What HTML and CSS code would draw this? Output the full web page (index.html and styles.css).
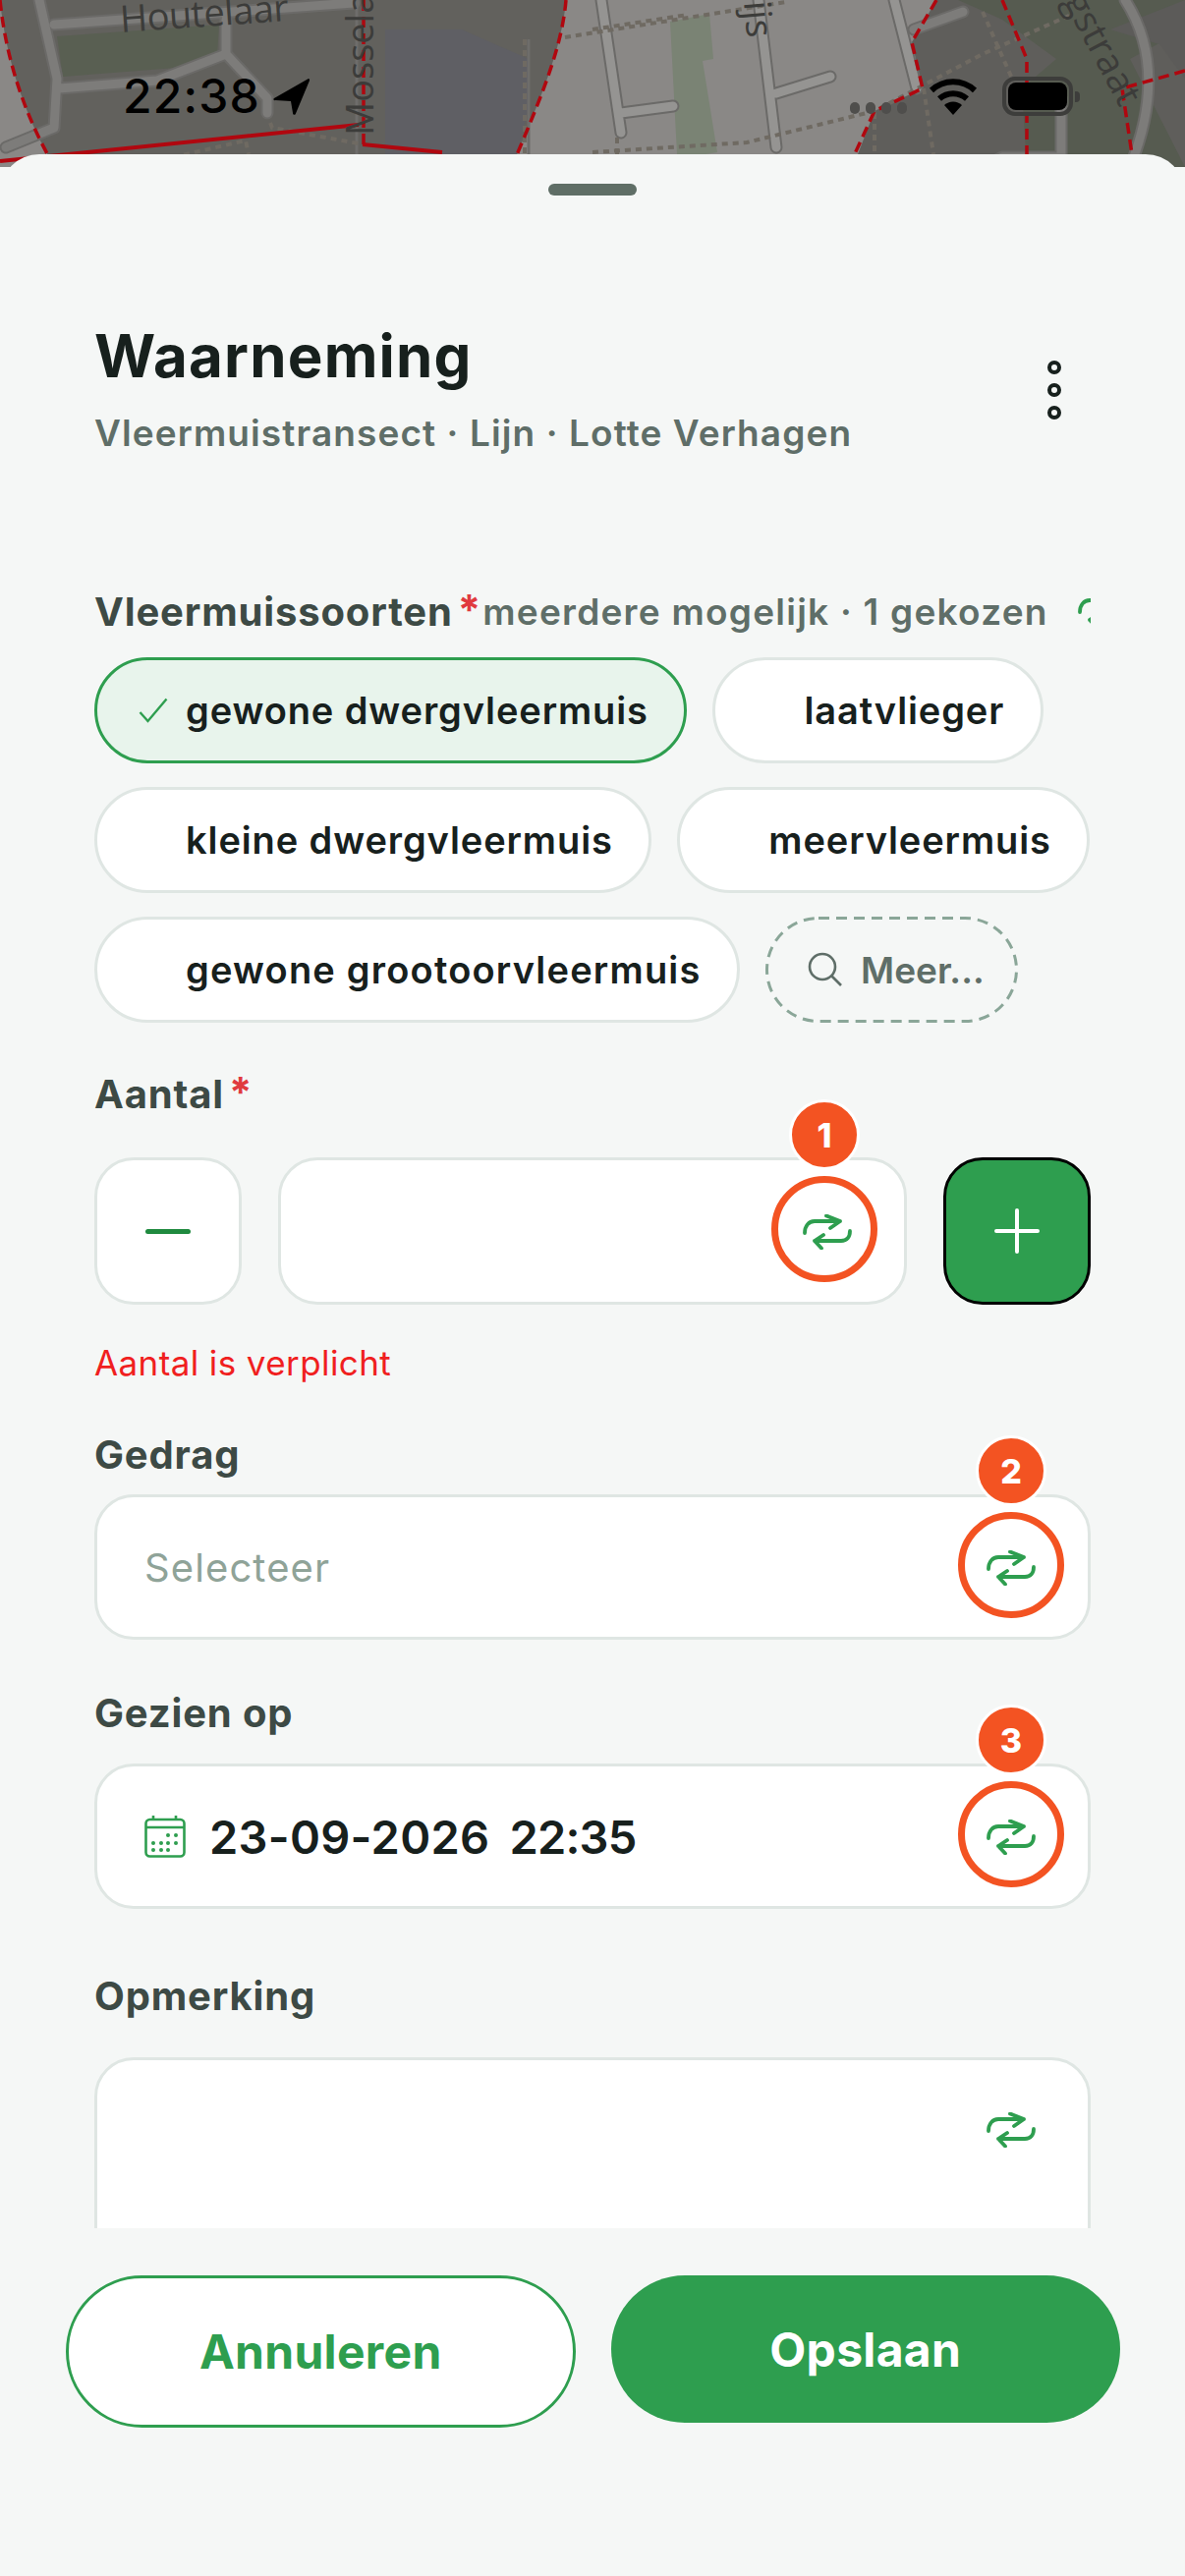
FILE: index.html
```html
<!DOCTYPE html>
<html lang="nl">
<head>
<meta charset="utf-8">
<title>Waarneming</title>
<link rel="stylesheet" href="styles.css">
</head>
<body>
<svg class="defs" width="0" height="0" aria-hidden="true">
  <symbol id="sync" viewBox="0 0 50 36">
    <path d="M2 19c0-7 4-12 10-12h26M24 1.500l14 5.500-10 7M48 17c0 6-3 10-9 10H12M21 21l-9 6 7 7.500" fill="none" stroke="currentColor" stroke-width="3.800" stroke-linecap="round" stroke-linejoin="round"/>
  </symbol>
</svg>

<div class="map">
  <svg viewBox="0 0 1206 170" width="1206" height="170" class="map-svg" aria-hidden="true">
    <rect width="1206" height="170" fill="#8a8886"/>
    <path d="M0 0C6 60 25 115 50 160H525C548 105 572 50 576 0Z" fill="#62615d"/>
    <path d="M392 30H470L538 60V110L525 160H392Z" fill="#5f5f64"/>
    <path d="M953 0L928 43L939 90L890 113L868 170H1206V0Z" fill="#5f5e5b"/>
    <path d="M975 0H1206V30L1150 60L1206 170H1045L1040 90L1075 60L1020 20Z" fill="#565b50"/>
    <path d="M1130 30L1206 0V80L1180 45Z" fill="#5c5b59"/>
    <path d="M58 37L223 25L221 56L192 68L64 78Z" fill="#595f52"/>
    <path d="M682 22L722 14L726 60L715 62L730 155L700 160L632 172L630 176H690Z" fill="#7a8374"/>
    <g fill="none" stroke="#6b6a68" stroke-width="13" stroke-linecap="round" stroke-linejoin="round">
      <path d="M40 0L58 80L55 130L6 150M55 25L360 3M230 20V55L160 82L60 90M230 55L272 100V115"/>
      <path d="M612 0L632 135M632 115L685 108M772 0L790 150M790 95L845 78M910 0L933 90M930 30L980 12M810 170V165"/>
      <path d="M1000 170L1020 160H1080V100M1145 0Q1190 70 1150 170"/>
    </g>
    <g fill="none" stroke="#7d7c7a" stroke-width="9" stroke-linecap="round" stroke-linejoin="round">
      <path d="M40 0L58 80L55 130L6 150M55 25L360 3M230 20V55L160 82L60 90M230 55L272 100V115"/>
    </g>
    <g fill="none" stroke="#959492" stroke-width="9" stroke-linecap="round" stroke-linejoin="round">
      <path d="M612 0L632 135M632 115L685 108M772 0L790 150M790 95L845 78M910 0L933 90"/>
    </g>
    <g fill="none" stroke="#7d7c7a" stroke-width="9" stroke-linecap="round" stroke-linejoin="round">
      <path d="M930 30L980 12M1000 170L1020 160H1080V100M1145 0Q1190 70 1150 170"/>
    </g>
    <path d="M363 0V157M538 40V157" stroke="#6e6d6b" stroke-width="3" fill="none"/>
    <g fill="none" stroke="#6f6a62" stroke-width="4" stroke-dasharray="6 5">
      <path d="M275 125L277 130L370 147M155 165L250 143L253 157M534 40V157"/>
      <path d="M575 38L800 2M603 30L700 15M603 155L760 145L890 113L1000 55L1090 15"/>
      <path d="M628 140V157M890 115V157M940 90L950 157M1000 12L1030 80"/>
    </g>
    <g fill="none" stroke="#b0070f" stroke-width="3.500" stroke-dasharray="11 6">
      <path d="M0 0C6 60 25 115 50 160M576 0C572 50 548 105 525 160"/>
      <path d="M370 0V147M953 0L928 43L939 90L890 113L866 165M1020 0L1045 60L1045 157M1206 72L1142 90L1152 157"/>
    </g>
    <path d="M0 164L365 127M369 147L450 155" fill="none" stroke="#b0070f" stroke-width="4"/>
    <g fill="#3c3c3a" font-family="'Open Sans', sans-serif" font-size="38">
      <text x="123" y="33" transform="rotate(-4 123 33)" textLength="172">Houtelaar</text>
      <text x="380" y="138" transform="rotate(-90 380 138)">Mosselaan</text>
      <text x="757" y="2" transform="rotate(85 757 2)">ijs</text>
      <text x="1058" y="-44" transform="rotate(62 1058 -44)">Hogstraat</text>
    </g>
  </svg>
  <div class="status">
    <div class="status-left">
      <span class="time">22:38</span>
      <svg class="loc" viewBox="0 0 38 38" aria-hidden="true"><path d="M36 1L1 21a1 1 0 0 0 1 2l16 1 2 12a1.500 1.500 0 0 0 3 .5L37 3a1.500 1.500 0 0 0-1-2Z" fill="#000"/></svg>
    </div>
    <div class="status-right">
      <div class="dots"><i></i><i></i><i></i><i></i></div>
      <svg class="wifi" viewBox="0 0 50 38" aria-hidden="true">
        <path d="M3 13a32 32 0 0 1 44 0" fill="none" stroke="#000" stroke-width="6"/>
        <path d="M11 21.500a21 21 0 0 1 28 0" fill="none" stroke="#000" stroke-width="6"/>
        <path d="M16 28a13 13 0 0 1 18 0L25 38Z" fill="#000"/>
      </svg>
      <div class="battery"><div class="battery-fill"></div></div>
    </div>
  </div>
</div>

<main class="sheet">
  <div class="handle"></div>
  <header class="head">
    <div>
      <h1 class="title">Waarneming</h1>
      <p class="subtitle">Vleermuistransect · Lijn · Lotte Verhagen</p>
    </div>
    <svg class="kebab" viewBox="0 0 16 60" aria-hidden="true">
      <circle cx="8" cy="7" r="5" /><circle cx="8" cy="30" r="5" /><circle cx="8" cy="53" r="5" />
    </svg>
  </header>

  <section class="form">
    <div class="label-row">
      <span class="label">Vleermuissoorten</span><span class="star">*</span><span class="hint">meerdere mogelijk · 1 gekozen</span>
      <svg class="sync-icon clipped"><use href="#sync"/></svg>
    </div>
    <div class="chips">
      <div class="chip selected">
        <span class="chip-slot"><svg class="check" viewBox="0 0 30 26" aria-hidden="true"><path d="M1.500 15l8 9L28.500 1.500" fill="none" stroke="#2e9e4f" stroke-width="2.400"/></svg></span>gewone dwergvleermuis
      </div>
      <div class="chip"><span class="chip-slot"></span>laatvlieger</div>
      <div class="chip"><span class="chip-slot"></span>kleine dwergvleermuis</div>
      <div class="chip"><span class="chip-slot"></span>meervleermuis</div>
      <div class="chip wide"><span class="chip-slot"></span>gewone grootoorvleermuis</div>
      <div class="chip more">
        <svg class="dash" viewBox="0 0 257 108" aria-hidden="true"><rect x="1.500" y="1.500" width="254" height="105" rx="52.500" fill="none" stroke="#8aa698" stroke-width="3" stroke-dasharray="11 7"/></svg>
        <svg class="search" viewBox="0 0 36 36" aria-hidden="true"><circle cx="15" cy="15" r="13" fill="none" stroke="#5f6e68" stroke-width="2.600"/><path d="M24.500 24.500L34 34" stroke="#5f6e68" stroke-width="2.600" fill="none"/></svg>Meer...
      </div>
    </div>

    <div class="label-row aantal-label"><span class="label">Aantal</span><span class="star">*</span></div>
    <div class="stepper">
      <div class="step-btn"><span class="minus"></span></div>
      <div class="field stepper-input">
        <div class="ring nudge"><span class="badge">1</span><svg class="sync-icon"><use href="#sync"/></svg></div>
      </div>
      <div class="step-btn plus">
        <svg class="plus-icon" viewBox="0 0 46 46" aria-hidden="true"><path d="M23 2V44M2 23H44" stroke="#fff" stroke-width="4" stroke-linecap="round"/></svg>
      </div>
    </div>
    <p class="error">Aantal is verplicht</p>

    <div class="label-row gedrag-label"><span class="label">Gedrag</span></div>
    <div class="field">
      <span class="placeholder">Selecteer</span>
      <div class="ring"><span class="badge">2</span><svg class="sync-icon"><use href="#sync"/></svg></div>
    </div>

    <div class="label-row gezien-label"><span class="label">Gezien op</span></div>
    <div class="field">
      <div class="date">
        <svg class="calendar" viewBox="0 0 42 44" aria-hidden="true">
          <rect x="1.500" y="5" width="39" height="37.500" rx="4" fill="none" stroke="#2e9e4f" stroke-width="2.600"/>
          <path d="M1.500 13H40.500M9 1V6M32 1V6" stroke="#2e9e4f" stroke-width="2.600" fill="none"/>
          <g fill="#2e9e4f">
            <circle cx="24" cy="21" r="2"/><circle cx="32" cy="21" r="2"/>
            <circle cx="9" cy="29" r="2"/><circle cx="17" cy="29" r="2"/><circle cx="24" cy="29" r="2"/><circle cx="32" cy="29" r="2"/>
            <circle cx="9" cy="36" r="2"/><circle cx="17" cy="36" r="2"/><circle cx="24" cy="36" r="2"/>
          </g>
        </svg>
        <span class="date-text">23-09-2026</span><span class="date-text clock">22:35</span>
      </div>
      <div class="ring"><span class="badge">3</span><svg class="sync-icon"><use href="#sync"/></svg></div>
    </div>

    <div class="label-row opmerking-label"><span class="label">Opmerking</span></div>
    <div class="field textarea">
      <div class="ring bare"><svg class="sync-icon"><use href="#sync"/></svg></div>
    </div>
  </section>

  <footer class="actions">
    <div class="btn ghost">Annuleren</div>
    <div class="btn solid">Opslaan</div>
  </footer>
</main>
</body>
</html>
```
FILE: styles.css
```css
* { box-sizing: border-box; }
html, body { margin: 0; padding: 0; }
body {
  width: 1206px;
  height: 2622px;
  overflow: hidden;
  position: relative;
  background: #f5f7f6;
  font-family: Inter, "Liberation Sans", sans-serif;
  color: #17201d;
}
.defs { position: absolute; }

.map { position: absolute; top: 0; left: 0; width: 1206px; height: 170px; overflow: hidden; }
.map-svg { display: block; }
.status { position: absolute; inset: 0; }
.status-left { position: absolute; left: 125px; top: 72px; display: flex; align-items: center; gap: 13px; height: 52px; }
.time { font-size: 48px; font-weight: 500; letter-spacing: 1.2px; color: #000; line-height: 52px; }
.loc { width: 38px; height: 38px; }
.status-right { position: absolute; left: 865px; top: 78px; display: flex; align-items: center; height: 40px; }
.dots { display: flex; gap: 6px; margin-top: 24px; margin-right: 22px; }
.dots i { width: 10px; height: 12px; border-radius: 5px; background: #4f4e4c; }
.wifi { width: 50px; height: 38px; margin-right: 25px; }
.battery { width: 72px; height: 40px; border: 4px solid #3d3d3b; border-radius: 13px; padding: 2px; position: relative; }
.battery::after { content: ""; position: absolute; right: -11px; top: 11px; width: 5px; height: 11px; border-radius: 0 4px 4px 0; background: #3d3d3b; }
.battery-fill { width: 100%; height: 100%; background: #000; border-radius: 8px; }

.sheet {
  position: relative;
  margin-top: 157px;
  height: 2465px;
  background: #f5f7f6;
  border-radius: 40px 40px 0 0;
  display: flex;
  flex-direction: column;
}
.handle { width: 90px; height: 12px; margin: 30px auto 0; border-radius: 6px; background: #5f6e66; flex: none; }
.head { display: flex; justify-content: space-between; align-items: center; margin-top: 127px; padding: 0 96px; flex: none; }
.title { margin: 0; font-size: 60px; line-height: 72px; font-weight: 700; letter-spacing: 1.2px; }
.subtitle { margin: 19px 0 0; font-size: 37px; line-height: 48px; font-weight: 600; color: #5f6e68; letter-spacing: 1.1px; }
.kebab { width: 16px; height: 60px; fill: none; stroke: #17201d; stroke-width: 4; margin-right: 29px; margin-top: 2px; }

.form { height: 1670px; margin-top: 133px; padding: 0 96px; overflow: hidden; flex: none; }
.label-row { display: flex; align-items: center; height: 48px; white-space: nowrap; overflow: hidden; }
.label { font-size: 40px; font-weight: 700; color: #3d4a45; letter-spacing: 0.85px; }
.star { color: #e03a3e; font-size: 42px; font-weight: 700; margin-left: 5px; margin-top: -4px; }
.hint { font-size: 37px; font-weight: 600; color: #5f6e68; margin-left: 2px; letter-spacing: 1.25px; }
.clipped { margin-left: 30px; flex: none; }
.sync-icon { width: 50px; height: 36px; color: #2e9e4f; display: block; flex: none; }

.chips { display: flex; flex-wrap: wrap; gap: 24px 26px; margin-top: 23px; }
.chip {
  height: 108px;
  border-radius: 54px;
  background: #fff;
  border: 3px solid #dfe6e3;
  display: flex;
  align-items: center;
  padding: 0 36.500px 0 38px;
  font-size: 38px;
  font-weight: 600;
  letter-spacing: 0.9px;
  white-space: nowrap;
}
.wide { letter-spacing: 1.2px; }
.chip-slot { width: 52px; display: flex; align-items: center; flex: none; }
.check { width: 30px; height: 26px; margin-left: 4px; }
.selected { background: #e8f4ec; border-color: #2e9e4f; }
.more { position: relative; width: 257px; background: transparent; border: 0; color: #5f6e68; padding: 0 0 0 43px; font-size: 37px; letter-spacing: 0; }
.dash { position: absolute; top: 0; left: 0; width: 257px; height: 108px; }
.search { width: 36px; height: 36px; margin-right: 18px; }

.aantal-label { margin-top: 48px; overflow: visible; }
.stepper { display: flex; gap: 37px; margin-top: 41px; }
.step-btn { width: 150px; height: 150px; border-radius: 40px; background: #fff; border: 3px solid #dfe6e3; display: flex; align-items: center; justify-content: center; flex: none; }
.minus { width: 46px; height: 5px; border-radius: 3px; background: #1f8a3f; }
.plus { background: #2e9e4f; border-color: #000; }
.plus-icon { width: 46px; height: 46px; }
.field {
  position: relative;
  height: 148px;
  border-radius: 40px;
  background: #fff;
  border: 3px solid #dfe6e3;
  display: flex;
  align-items: center;
  justify-content: space-between;
  padding: 0 24px 0 48px;
}
.stepper-input { flex: 1; height: 150px; justify-content: flex-end; padding-right: 27px; }
.ring { position: relative; width: 108px; height: 108px; margin-bottom: 4px; border-radius: 50%; border: 7px solid #f35322; display: flex; align-items: center; justify-content: center; flex: none; }
.ring .sync-icon { margin-top: 5px; }
.nudge .sync-icon { margin-left: 6px; }
.bare { border-color: transparent; }
.badge {
  position: absolute;
  top: -85px;
  left: 50%;
  margin-left: -36px;
  width: 72px;
  height: 72px;
  border-radius: 50%;
  background: #f35322;
  border: 3px solid #fff;
  color: #fff;
  font-size: 34px;
  font-weight: 800;
  display: flex;
  align-items: center;
  justify-content: center;
}
.error { margin: 37px 0 0; height: 44px; line-height: 44px; color: #f01f1f; font-size: 35px; font-weight: 400; letter-spacing: 0.4px; }
.gedrag-label { margin-top: 47px; }
.placeholder { font-size: 40px; color: #8fa398; letter-spacing: 1.1px; }
.gezien-label { margin-top: 50px; }
.date { display: flex; align-items: center; }
.calendar { width: 42px; height: 44px; margin-right: 24px; }
.date-text { font-size: 47px; font-weight: 600; letter-spacing: 0.3px; margin-right: 20px; }
.clock { letter-spacing: -0.8px; }
.opmerking-label { margin-top: 64px; }
.textarea { height: 260px; align-items: flex-start; justify-content: flex-end; padding-top: 14px; }
.gedrag-label + .field { margin-top: 17px; }
.gezien-label + .field { margin-top: 28px; }
.opmerking-label + .field { margin-top: 39px; }

.actions { display: flex; align-items: flex-start; gap: 36px; padding: 48px 0 0 67px; }
.btn { flex: 0 0 518.500px; border-radius: 78px; display: flex; align-items: center; justify-content: center; font-size: 48px; font-weight: 700; letter-spacing: 0.3px; }
.ghost { height: 155px; background: #fff; border: 3px solid #2e9e4f; color: #2e9e4f; }
.solid { height: 150px; background: #2e9e4f; color: #fff; }
```
